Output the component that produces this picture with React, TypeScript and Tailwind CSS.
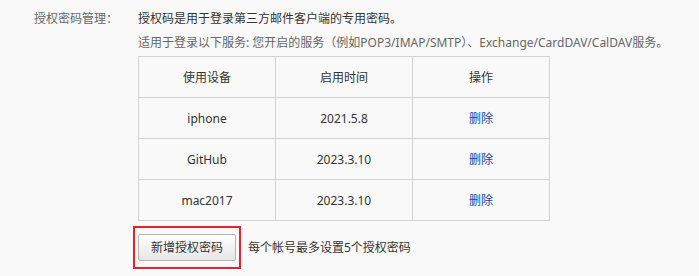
const rows = [
  { device: "iphone", date: "2021.5.8" },
  { device: "GitHub", date: "2023.3.10" },
  { device: "mac2017", date: "2023.3.10" },
];

export default function App() {
  return (
    <div
      className="w-[699px] h-[276px] bg-[#f9f9f9] text-[12px] text-[#333]"
      style={{ fontFamily: '"Noto Sans", "Noto Sans CJK SC", sans-serif' }}
    >
      <div className="flex pt-[7px]">
        <div className="w-[138px] pl-[34px] text-[#666] leading-[24px] shrink-0">授权密码管理：</div>
        <div className="flex flex-col">
          <div className="leading-[24px]">授权码是用于登录第三方邮件客户端的专用密码。</div>
          <div className="leading-[24px] text-[#666]">
            适用于登录以下服务: 您开启的服务（例如POP3/IMAP/SMTP）、Exchange/CardDAV/CalDAV服务。
          </div>
          <table className="mt-[1px] w-[412px] border-collapse table-fixed text-center">
            <thead>
              <tr className="h-[41px]">
                <th className="border border-[#d2d2d2] font-normal pt-[2px]">使用设备</th>
                <th className="border border-[#d2d2d2] font-normal pt-[2px]">启用时间</th>
                <th className="border border-[#d2d2d2] font-normal pt-[2px]">操作</th>
              </tr>
            </thead>
            <tbody>
              {rows.map((r) => (
                <tr key={r.device} className="h-[41px]">
                  <td className="border border-[#d2d2d2] pt-[2px]">{r.device}</td>
                  <td className="border border-[#d2d2d2] pt-[2px]">{r.date}</td>
                  <td className="border border-[#d2d2d2] pt-[2px]">
                    <a className="text-[#1a459e] cursor-pointer">删除</a>
                  </td>
                </tr>
              ))}
            </tbody>
          </table>
          <div className="flex items-center mt-[5px] -ml-[5px]">
            <div className="border-2 border-[#e8222c] px-[3px] py-[6px]">
              <button className="w-[98px] h-[27px] rounded-[2px] border border-[#b4b4b4] bg-gradient-to-b from-white to-[#e6e6e6] text-[#333] leading-none">
                新增授权密码
              </button>
            </div>
            <span className="ml-[7px]">每个帐号最多设置5个授权密码</span>
          </div>
        </div>
      </div>
    </div>
  );
}
